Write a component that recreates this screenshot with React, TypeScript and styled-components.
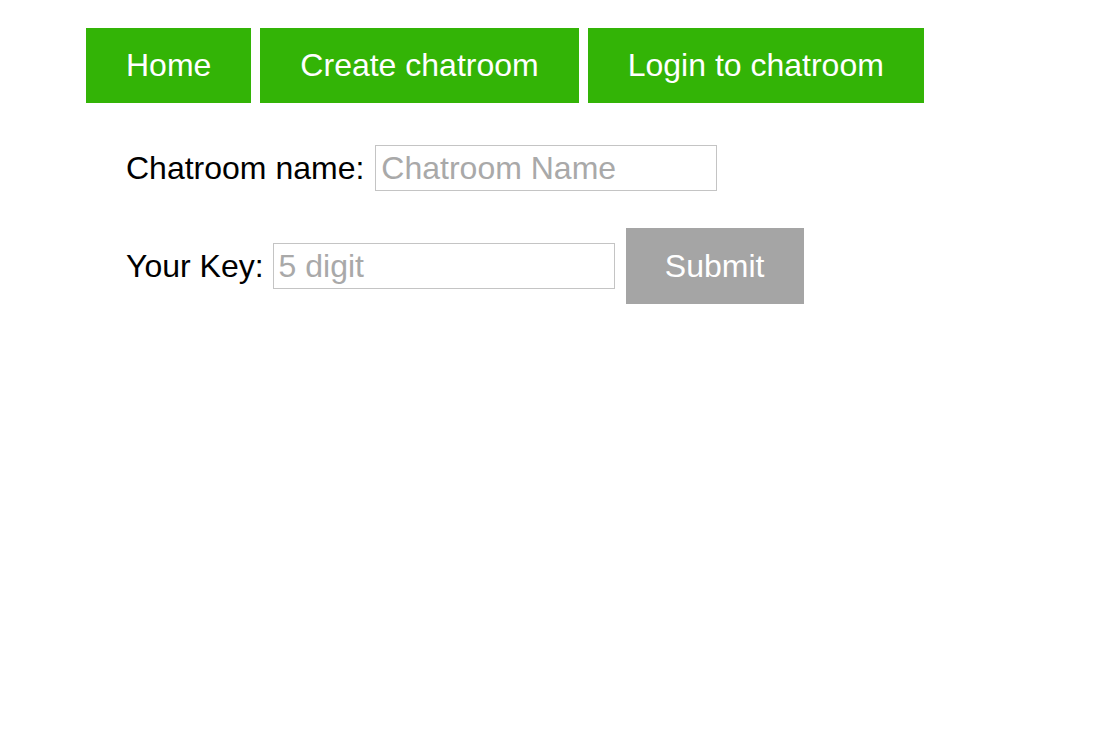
import React from "react";
import styled, { createGlobalStyle } from "styled-components";

const GlobalStyle = createGlobalStyle`
  body {
    margin: 0;
    background: #ffffff;
    font-family: "Liberation Sans", Arial, Helvetica, sans-serif;
  }
`;

const Page = styled.div`
  padding: 28px 0 0 86px;
`;

const NavBar = styled.nav`
  display: flex;
  align-items: flex-start;
`;

const NavButton = styled.button<{ $gap?: number }>`
  background: #33b406;
  color: #ffffff;
  border: none;
  margin: 0 ${(p) => p.$gap ?? 0}px 0 0;
  padding: 19px 40px;
  height: 75px;
  font-family: "Liberation Sans", Arial, sans-serif;
  font-size: 32px;
  line-height: 37px;
  cursor: pointer;
`;

const Form = styled.form`
  display: flex;
  flex-direction: column;
  padding: 42px 0 0 40px;
`;

const Row = styled.div<{ $top?: number }>`
  display: flex;
  align-items: center;
  margin-top: ${(p) => p.$top ?? 0}px;
`;

const Label = styled.label`
  font-size: 32px;
  color: #000000;
  white-space: nowrap;
`;

const TextInput = styled.input<{ $gap?: number }>`
  box-sizing: border-box;
  width: 342px;
  height: 46px;
  margin-left: ${(p) => p.$gap ?? 10}px;
  padding: 0 5px;
  border: 1px solid #c4c4c4;
  font-family: "Liberation Sans", Arial, sans-serif;
  font-size: 32px;
  color: #000;
  outline: none;
  &::placeholder {
    color: #a9a9a9;
  }
`;

const SubmitButton = styled.button`
  margin-left: 11px;
  width: 178px;
  height: 76px;
  padding: 0;
  border: none;
  background: #a5a5a5;
  color: #ffffff;
  font-family: "Liberation Sans", Arial, sans-serif;
  font-size: 32px;
`;

export default function App() {
  return (
    <Page>
      <GlobalStyle />
      <NavBar>
        <NavButton $gap={9}>Home</NavButton>
        <NavButton $gap={9}>Create chatroom</NavButton>
        <NavButton>Login to chatroom</NavButton>
      </NavBar>
      <Form onSubmit={(e) => e.preventDefault()}>
        <Row>
          <Label>Chatroom name:</Label>
          <TextInput $gap={11} placeholder="Chatroom Name" />
        </Row>
        <Row $top={37}>
          <Label>Your Key:</Label>
          <TextInput $gap={9} placeholder="5 digit" />
          <SubmitButton type="submit">Submit</SubmitButton>
        </Row>
      </Form>
    </Page>
  );
}
